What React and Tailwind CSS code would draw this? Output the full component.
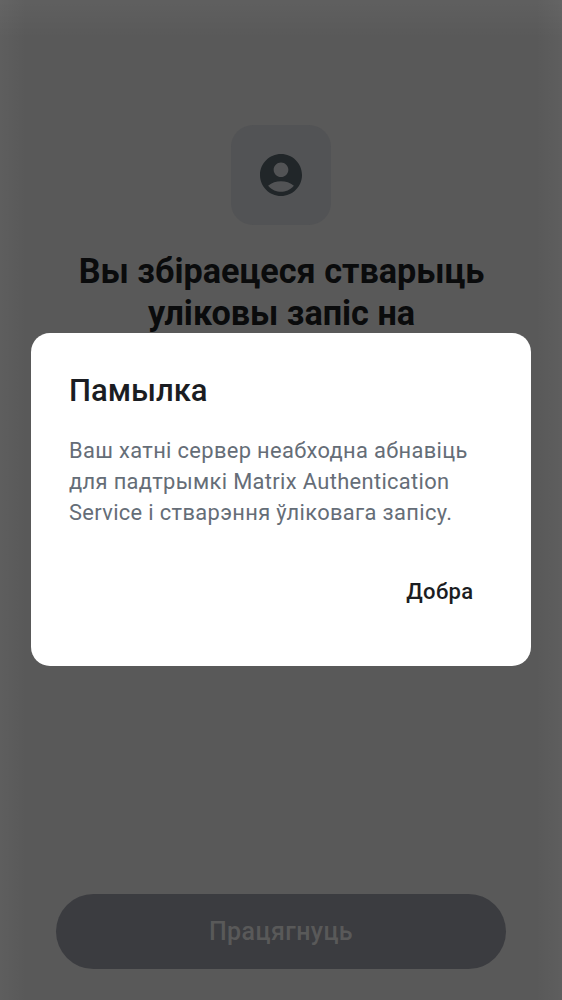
export default function App() {
  return (
    <div className="relative flex h-[1000px] w-[562px] flex-col items-center overflow-hidden bg-[#595959] bg-[linear-gradient(to_bottom,#ffffff0a,#ffffff00_38px),linear-gradient(to_right,#ffffff08,#ffffff00_26px,#ffffff00_536px,#ffffff08)] font-['Roboto',sans-serif]">
      <div className="mt-[125px] flex h-[100px] w-[100px] items-center justify-center rounded-[22px] bg-[#525355]">
        <svg viewBox="2 2 20 20" className="h-[42px] w-[42px]" fill="#212629">
          <path d="M12 2C6.48 2 2 6.48 2 12s4.48 10 10 10 10-4.48 10-10S17.52 2 12 2zm0 4c1.93 0 3.5 1.57 3.5 3.5S13.93 13 12 13s-3.5-1.57-3.5-3.5S10.07 6 12 6zm0 14c-2.03 0-4.43-.82-6.14-2.88a9.95 9.95 0 0 1 12.28 0C16.43 19.18 14.03 20 12 20z" />
        </svg>
      </div>
      <h1 className="mt-[25px] pl-px text-center text-[34.2px] leading-[42px] font-bold whitespace-nowrap text-[#0a0b0c]">
        Вы збіраецеся стварыць<br />уліковы запіс на
      </h1>
      <button className="mt-auto mb-[31px] h-[75px] w-[450px] rounded-full bg-[#3b3c40] text-[25px] font-medium tracking-[0.4px] text-[#595959]">Працягнуць</button>
      <div role="dialog" className="absolute top-[333.3px] left-[31px] flex h-[332.7px] w-[500px] flex-col rounded-[19px] bg-white px-[38px] pt-[37.7px]">
        <h2 className="text-[31px] leading-[40px] font-medium text-[#1b1d22]">Памылка</h2>
        <p className="mt-[24px] text-[21.875px] leading-[31.25px] tracking-[0.35px] whitespace-nowrap text-[#656d77]">
          Ваш хатні сервер неабходна абнавіць<br />для падтрымкі Matrix Authentication<br />Service і стварэння ўліковага запісу.
        </p>
        <button className="mt-[47px] mr-[19.5px] self-end text-[22px] leading-[31px] font-medium tracking-[0.4px] text-[#1b1d22]">Добра</button>
      </div>
    </div>
  );
}
